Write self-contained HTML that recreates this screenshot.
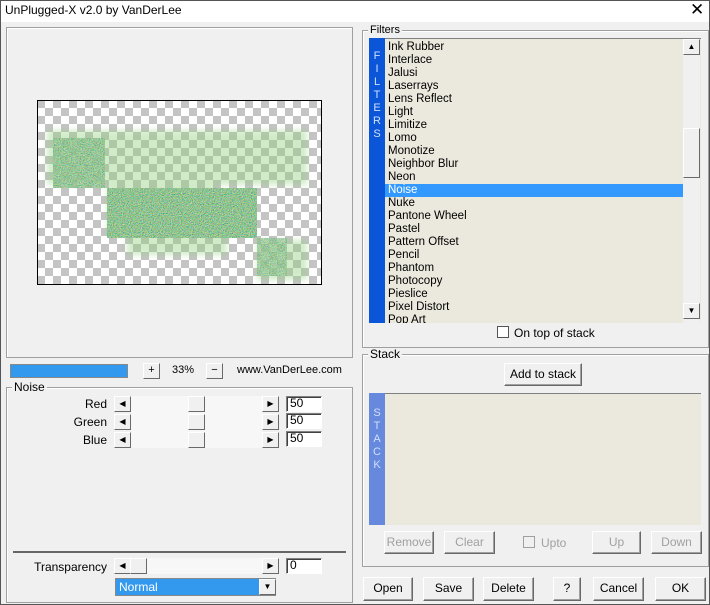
<!DOCTYPE html>
<html><head><style>
*{box-sizing:border-box;margin:0;padding:0}
body{width:710px;height:605px;overflow:hidden;background:#f0f0f0;font-family:"Liberation Sans",sans-serif;font-size:11px;color:#000;position:relative}
.a{position:absolute}
.grp{position:absolute;border:1px solid #a0a0a0;box-shadow:inset 1px 1px 0 #fff}
.lbl{position:absolute;background:#f0f0f0;padding:0 2px;line-height:13px}
.btn{position:absolute;background:#f0f0f0;border:1px solid;border-color:#fff #696969 #696969 #fff;box-shadow:inset -1px -1px 0 #a0a0a0;text-align:center;line-height:20px;font-size:12px}
.dis{color:#a0a0a0}
.edit{position:absolute;background:#fff;border:1px solid;border-color:#808080 #fff #fff #808080;box-shadow:inset 1px 1px 0 #404040;padding-left:3px;line-height:13px;font-size:12px}
.sb{position:absolute;width:17px;height:16px;background:#f0f0f0;border:1px solid;border-color:#fff #696969 #696969 #fff;font-size:8px;text-align:center;line-height:14px}
.track{position:absolute;background:#f7f7f7}
.item{height:13px;line-height:13px;padding-left:3px;font-size:11.5px}
</style></head><body>
<div class="a" style="left:0;top:0;width:710px;height:605px;border:1px solid #555"></div>
<div class="a" style="left:1px;top:1px;width:708px;height:21px;background:#fff"></div>
<div class="a" style="left:5px;top:3px;font-size:12px">UnPlugged-X v2.0 by VanDerLee</div>
<div class="a" style="left:690px;top:0px;font-size:17px">✕</div>

<div class="grp" style="left:6px;top:27px;width:347px;height:331px"></div>
<svg class="a" style="left:37px;top:100px" width="285" height="185">
<defs>
<pattern id="ck" width="16" height="16" patternUnits="userSpaceOnUse"><rect width="16" height="16" fill="#fff"/><rect width="8" height="8" fill="#c4c4c4"/><rect x="8" y="8" width="8" height="8" fill="#c4c4c4"/></pattern>
<filter id="nz"><feTurbulence type="fractalNoise" baseFrequency="0.9" numOctaves="2" result="t"/><feColorMatrix in="t" type="matrix" values="1.2 0 0 0 -0.3  0 1.1 0 0 0  0 0 1.0 0 -0.2  0 0 0 0 1" result="c"/><feComposite in="c" in2="SourceGraphic" operator="in"/></filter>
<filter id="bl"><feGaussianBlur stdDeviation="3"/></filter>
</defs>
<rect width="285" height="185" fill="url(#ck)"/>
<g filter="url(#bl)" opacity="0.4" fill="#8fcf7a">
<rect x="10" y="30" width="260" height="55"/><rect x="70" y="85" width="110" height="50"/><rect x="220" y="140" width="50" height="40"/><rect x="90" y="130" width="100" height="25"/>
</g>
<rect x="70" y="88" width="150" height="50" fill="#3f8a30"/><rect x="70" y="88" width="150" height="50" filter="url(#nz)"/>
<rect x="16" y="38" width="52" height="50" filter="url(#nz)" opacity="0.85"/>
<rect x="220" y="138" width="30" height="38" filter="url(#nz)" opacity="0.7"/>
<rect x="0.5" y="0.5" width="284" height="184" fill="none" stroke="#000"/>
</svg>

<div class="a" style="left:10px;top:364px;width:118px;height:14px;background:#3399ee;border:1px solid #888"></div>
<div class="sb" style="left:143px;top:363px;font-size:11px;line-height:13px">+</div>
<div class="a" style="left:172px;top:364px">33%</div>
<div class="sb" style="left:206px;top:363px;font-size:11px;line-height:13px">−</div>
<div class="a" style="left:237px;top:364px">www.VanDerLee.com</div>

<div class="grp" style="left:6px;top:387px;width:347px;height:216px"></div>
<div class="lbl" style="left:12px;top:381px;font-size:12px">Noise</div>

<div class="a" style="left:60px;top:397px;width:47px;text-align:right;font-size:12px">Red</div>
<div class="a" style="left:60px;top:415px;width:47px;text-align:right;font-size:12px">Green</div>
<div class="a" style="left:60px;top:433px;width:47px;text-align:right;font-size:12px">Blue</div>
<div class="track" style="left:131px;top:396px;width:131px;height:52px"></div>
<div class="sb" style="left:114px;top:396px">◀</div><div class="sb" style="left:188px;top:396px"></div><div class="sb" style="left:262px;top:396px">▶</div>
<div class="sb" style="left:114px;top:414px">◀</div><div class="sb" style="left:188px;top:414px"></div><div class="sb" style="left:262px;top:414px">▶</div>
<div class="sb" style="left:114px;top:432px">◀</div><div class="sb" style="left:188px;top:432px"></div><div class="sb" style="left:262px;top:432px">▶</div>
<div class="edit" style="left:286px;top:396px;width:36px;height:16px">50</div>
<div class="edit" style="left:286px;top:413px;width:36px;height:16px">50</div>
<div class="edit" style="left:286px;top:431px;width:36px;height:16px">50</div>

<div class="a" style="left:13px;top:551px;width:333px;height:2px;background:#666"></div>
<div class="a" style="left:20px;top:560px;width:87px;text-align:right;font-size:12px">Transparency</div>
<div class="track" style="left:131px;top:558px;width:131px;height:16px"></div>
<div class="sb" style="left:114px;top:558px">◀</div><div class="sb" style="left:130px;top:558px"></div><div class="sb" style="left:262px;top:558px">▶</div>
<div class="edit" style="left:286px;top:558px;width:36px;height:16px">0</div>
<div class="a" style="left:115px;top:578px;width:161px;height:18px;background:#3399ee;border:1px solid #888;color:#fff;padding-left:3px;line-height:16px;font-size:12px">Normal</div>
<div class="sb" style="left:259px;top:579px;height:16px">▼</div>

<div class="grp" style="left:362px;top:30px;width:347px;height:318px"></div>
<div class="lbl" style="left:368px;top:24px">Filters</div>
<div class="a" style="left:369px;top:38px;width:16px;height:285px;background:#0a55d8;color:#cfe0ff;text-align:center;font-size:11px;line-height:13px;padding-top:12px">F<br>I<br>L<br>T<br>E<br>R<br>S</div>
<div class="a" style="left:385px;top:38px;width:316px;height:285px;background:#ebe8dd;border-top:1px solid #808080;overflow:hidden">
<div style="padding-top:2px;width:298px">
<div class="item">Ink Rubber</div><div class="item">Interlace</div><div class="item">Jalusi</div><div class="item">Laserrays</div><div class="item">Lens Reflect</div><div class="item">Light</div><div class="item">Limitize</div><div class="item">Lomo</div><div class="item">Monotize</div><div class="item">Neighbor Blur</div><div class="item">Neon</div><div class="item" style="background:#3399ff;color:#fff">Noise</div><div class="item">Nuke</div><div class="item">Pantone Wheel</div><div class="item">Pastel</div><div class="item">Pattern Offset</div><div class="item">Pencil</div><div class="item">Phantom</div><div class="item">Photocopy</div><div class="item">Pieslice</div><div class="item">Pixel Distort</div><div class="item">Pop Art</div>
</div></div>
<div class="a" style="left:683px;top:39px;width:17px;height:284px;background:#f0f0f0"></div>
<div class="sb" style="left:683px;top:39px">▲</div>
<div class="sb" style="left:683px;top:128px;height:50px"></div>
<div class="sb" style="left:683px;top:303px">▼</div>
<div class="a" style="left:497px;top:326px;width:12px;height:12px;background:#fff;border:1px solid #555"></div>
<div class="a" style="left:514px;top:326px;font-size:12px">On top of stack</div>

<div class="grp" style="left:362px;top:354px;width:347px;height:213px"></div>
<div class="lbl" style="left:368px;top:348px;font-size:12px">Stack</div>
<div class="btn" style="left:504px;top:363px;width:78px;height:23px">Add to stack</div>
<div class="a" style="left:369px;top:393px;width:16px;height:132px;background:#6688dd;color:#cfe0ff;text-align:center;font-size:11px;line-height:13px;padding-top:14px">S<br>T<br>A<br>C<br>K</div>
<div class="a" style="left:385px;top:393px;width:316px;height:132px;background:#ebe8dd;border-top:1px solid #808080"></div>
<div class="btn dis" style="left:384px;top:531px;width:50px;height:23px">Remove</div>
<div class="btn dis" style="left:444px;top:531px;width:51px;height:23px">Clear</div>
<div class="a" style="left:523px;top:536px;width:12px;height:12px;border:1px solid #a0a0a0"></div>
<div class="a dis" style="left:541px;top:536px;font-size:12px">Upto</div>
<div class="btn dis" style="left:592px;top:531px;width:49px;height:23px">Up</div>
<div class="btn dis" style="left:651px;top:531px;width:51px;height:23px">Down</div>

<div class="btn" style="left:363px;top:577px;width:50px;height:24px">Open</div>
<div class="btn" style="left:423px;top:577px;width:51px;height:24px">Save</div>
<div class="btn" style="left:483px;top:577px;width:51px;height:24px">Delete</div>
<div class="btn" style="left:553px;top:577px;width:28px;height:24px">?</div>
<div class="btn" style="left:593px;top:577px;width:51px;height:24px">Cancel</div>
<div class="btn" style="left:655px;top:577px;width:51px;height:24px">OK</div>
</body></html>
